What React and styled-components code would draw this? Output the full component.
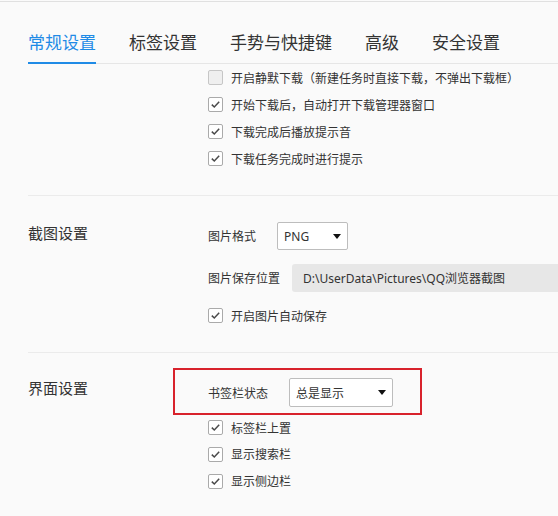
import React from "react";
import styled, { createGlobalStyle } from "styled-components";

const GlobalStyle = createGlobalStyle`
  body {
    margin: 0;
    background: #fafafa;
    font-family: "Noto Sans", "Noto Sans CJK SC", sans-serif;
    color: #333;
  }
`;

const Page = styled.div`
  margin-top: 1px;
  border-top: 1px solid #e0e0e0;
  background: #fafafa;
  height: 514px;
  overflow: hidden;
`;

const TabBar = styled.div`
  display: flex;
  gap: 33px;
  margin-left: 28px;
  padding-top: 29px;
  border-bottom: 1px solid #e6e6e6;
`;

const Tab = styled.div`
  font-size: 17px;
  line-height: 24px;
  padding-bottom: 7px;
  margin-bottom: -1px;
  white-space: nowrap;
  color: ${(props) => (props.$active ? "#1f8be6" : "#333")};
  border-bottom: 2px solid
    ${(props) => (props.$active ? "#1f8be6" : "transparent")};
`;

const Section = styled.div`
  display: grid;
  grid-template-columns: 180px 1fr;
  margin-left: 28px;
  border-top: ${(props) => (props.$first ? "none" : "1px solid #ebebeb")};
  padding-top: ${(props) => props.$top}px;
  padding-bottom: ${(props) => props.$bottom}px;
`;

const SectionTitle = styled.div`
  font-size: 15px;
  line-height: 20px;
  margin-top: ${(props) => props.$offset}px;
  color: #333;
`;

const Content = styled.div`
  display: flex;
  flex-direction: column;
`;

const CheckRow = styled.label`
  display: flex;
  align-items: center;
  gap: 8px;
  height: ${(props) => props.$h || 27}px;
  font-size: 12px;
  color: #333;
  white-space: nowrap;
  margin-top: ${(props) => props.$gap || 0}px;
`;

const Box = styled.span`
  display: flex;
  align-items: center;
  justify-content: center;
  width: 13px;
  height: 13px;
  border: 1px solid ${(props) => (props.$checked ? "#aaa" : "#c6c6c6")};
  border-radius: 2px;
  background: ${(props) => (props.$checked ? "#fff" : "#efefef")};
  flex-shrink: 0;
`;

const FieldRow = styled.div`
  display: flex;
  align-items: center;
  font-size: 12px;
  margin-top: ${(props) => props.$gap || 0}px;
`;

const FieldLabel = styled.span`
  white-space: nowrap;
  color: #333;
`;

const Select = styled.div`
  display: flex;
  align-items: center;
  justify-content: space-between;
  box-sizing: border-box;
  width: ${(props) => props.$width}px;
  height: ${(props) => props.$height}px;
  margin-left: 21px;
  padding: 0 6px 0 6px;
  border: 1px solid #bdbdbd;
  border-radius: 2px;
  background: #fff;
  font-size: 12px;
  color: #333;
`;

const PathField = styled.div`
  flex: 1;
  display: flex;
  align-items: center;
  height: 28px;
  margin-left: 12px;
  margin-right: -20px;
  padding-left: 11px;
  border-radius: 3px;
  background: #e7e7e7;
  color: #333;
  white-space: nowrap;
`;

const Highlight = styled.div`
  width: fit-content;
  margin-left: -35px;
  margin-bottom: -1px;
  padding: 8px 27px 6px 33px;
  border: 2px solid #d8222c;
`;

function Checkbox({ checked, children, gap, h }) {
  return (
    <CheckRow $gap={gap} $h={h}>
      <Box $checked={checked}>
        {checked && (
          <svg width="11" height="11" viewBox="0 0 11 11">
            <path
              d="M1.8 5.6 L4.3 8 L9.2 2.8"
              fill="none"
              stroke="#4a4a4a"
              strokeWidth="1.5"
            />
          </svg>
        )}
      </Box>
      {children}
    </CheckRow>
  );
}

function Arrow() {
  return (
    <svg width="8" height="5" viewBox="0 0 8 5">
      <polygon points="0,0 8,0 4,5" fill="#111" />
    </svg>
  );
}

const tabs = ["常规设置", "标签设置", "手势与快捷键", "高级", "安全设置"];

export default function App() {
  return (
    <>
      <GlobalStyle />
      <Page>
        <TabBar>
          {tabs.map((t, i) => (
            <Tab key={t} $active={i === 0}>
              {t}
            </Tab>
          ))}
        </TabBar>

        <Section $first $top={0} $bottom={23}>
          <div />
          <Content>
            <Checkbox>开启静默下载（新建任务时直接下载，不弹出下载框）</Checkbox>
            <Checkbox checked>开始下载后，自动打开下载管理器窗口</Checkbox>
            <Checkbox checked>下载完成后播放提示音</Checkbox>
            <Checkbox checked>下载任务完成时进行提示</Checkbox>
          </Content>
        </Section>

        <Section $top={26} $bottom={23}>
          <SectionTitle $offset={1}>截图设置</SectionTitle>
          <Content>
            <FieldRow>
              <FieldLabel>图片格式</FieldLabel>
              <Select $width={71} $height={28}>
                PNG
                <Arrow />
              </Select>
            </FieldRow>
            <FieldRow $gap={14}>
              <FieldLabel>图片保存位置</FieldLabel>
              <PathField>D:\UserData\Pictures\QQ浏览器截图</PathField>
            </FieldRow>
            <Checkbox checked gap={10}>
              开启图片自动保存
            </Checkbox>
          </Content>
        </Section>

        <Section $top={15} $bottom={0}>
          <SectionTitle $offset={10}>界面设置</SectionTitle>
          <Content>
            <Highlight>
              <FieldRow>
                <FieldLabel>书签栏状态</FieldLabel>
                <Select $width={104} $height={29}>
                  总是显示
                  <Arrow />
                </Select>
              </FieldRow>
            </Highlight>
            <Checkbox checked>标签栏上置</Checkbox>
            <Checkbox checked h={26}>显示搜索栏</Checkbox>
            <Checkbox checked h={28}>显示侧边栏</Checkbox>
          </Content>
        </Section>
      </Page>
    </>
  );
}
